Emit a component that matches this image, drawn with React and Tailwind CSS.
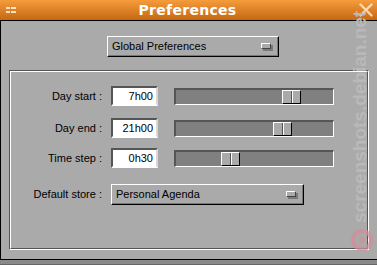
import React from 'react';

const font = { fontFamily: '"Liberation Sans", Arial, sans-serif' };

function Field({ value }) {
  return (
    <div className="w-[47px] h-[20px] bg-white border-2 border-t-[#555] border-l-[#555] border-b-white border-r-[#d8d8d8] flex items-center justify-end pr-[3px] text-[11px] text-black">
      {value}
    </div>
  );
}

function Slider({ pos }) {
  return (
    <div className="w-[160px] h-[17px] bg-[#808080] border-t-2 border-l-2 border-t-[#555] border-l-[#555] border-b border-r border-b-white border-r-white flex">
      <div style={{ width: pos }} />
      <div className="w-[19px] h-full bg-[#aaaaaa] border-t border-l border-white border-r border-b border-r-black border-b-black flex justify-center">
        <div className="w-[1px] h-full bg-[#555]" />
        <div className="w-[1px] h-full bg-white" />
      </div>
    </div>
  );
}

function Dropdown({ label, width }) {
  return (
    <div className={`${width} h-[21px] border border-t-white border-l-white border-b-black border-r-black`}>
      <div className="h-full border-b border-r border-b-[#777] border-r-[#777] flex items-center justify-between pl-[4px] pr-[6px] text-[11px] text-black">
        <span>{label}</span>
        <div className="relative w-[10px] h-[6px]">
          <div className="absolute left-[2px] top-[2px] w-[10px] h-[6px] bg-[#7a7a7a]" />
          <div className="absolute inset-0 bg-[#aaaaaa] border border-t-white border-l-white border-b-[#444] border-r-[#444]" />
        </div>
      </div>
    </div>
  );
}

function Row({ label, value, pos }) {
  return (
    <div className="flex items-center h-[20px]">
      <div className="w-[91px] text-right text-[11px] text-black">{label}</div>
      <div className="ml-[9px]"><Field value={value} /></div>
      <div className="ml-[16px]"><Slider pos={pos} /></div>
    </div>
  );
}

export default function App() {
  return (
    <div className="relative w-[377px] h-[265px] overflow-hidden bg-[#aaaaaa] flex flex-col" style={font}>
      <div className="h-[21px] shrink-0 bg-gradient-to-b from-[#f59c3b] to-[#c66710] border-b border-black flex items-center justify-between px-[6px]">
        <div className="flex flex-col gap-[2px]">
          <div className="flex gap-[1px]">
            <div className="w-[4px] h-[2px] bg-[#fde2c4]" />
            <div className="w-[5px] h-[2px] bg-[#fde2c4]" />
          </div>
          <div className="flex gap-[1px]">
            <div className="w-[4px] h-[2px] bg-[#fde2c4]" />
            <div className="w-[5px] h-[2px] bg-[#fde2c4]" />
          </div>
        </div>
        <div className="text-white text-[14px] font-bold tracking-[0.3px]" style={{ fontFamily: '"DejaVu Sans", sans-serif' }}>
          Preferences
        </div>
        <svg width="14" height="14" viewBox="0 0 14 14" className="-mr-[2px]">
          <path d="M1.5 1.5 L12.5 12.5 M12.5 1.5 L1.5 12.5" stroke="#fcd9b4" strokeWidth="2.4" strokeLinecap="round" />
        </svg>
      </div>

      <div className="flex-1 border-l border-b border-black flex flex-col">
        <div className="mt-[15px] ml-[106px]">
          <Dropdown label="Global Preferences" width="w-[172px]" />
        </div>
        <div className="mt-[13px] ml-[8px] w-[360px] h-[180px] border border-t-[#555] border-l-[#555] border-b-white border-r-white">
          <div className="h-full border border-t-white border-l-white border-b-[#555] border-r-[#555] pt-[14px] flex flex-col">
            <Row label="Day start :" value="7h00" pos={106} />
            <div className="h-[12px]" />
            <Row label="Day end :" value="21h00" pos={97} />
            <div className="h-[10px]" />
            <Row label="Time step :" value="0h30" pos={45} />
            <div className="h-[16px]" />
            <div className="flex items-center">
              <div className="w-[91px] text-right text-[11px] text-black">Default store :</div>
              <div className="ml-[9px]">
                <Dropdown label="Personal Agenda" width="w-[193px]" />
              </div>
            </div>
          </div>
        </div>
      </div>
      <div className="h-[5px] shrink-0 bg-[#8a8a8a] border-b border-[#666]" />

      <div className="absolute right-[3px] top-[6px] h-[222px] flex justify-center text-[19px] font-bold text-[#b9b9b9] whitespace-nowrap [writing-mode:vertical-rl] rotate-180">
        screenshots.debian.net
      </div>
      <div className="absolute left-[351px] top-[229px] w-[22px] h-[22px] rounded-full border-[4px] border-[#d98a9a] opacity-70 flex items-center justify-center">
        <div className="w-[6px] h-[6px] rounded-full border-2 border-[#d98a9a]" />
      </div>
    </div>
  );
}
